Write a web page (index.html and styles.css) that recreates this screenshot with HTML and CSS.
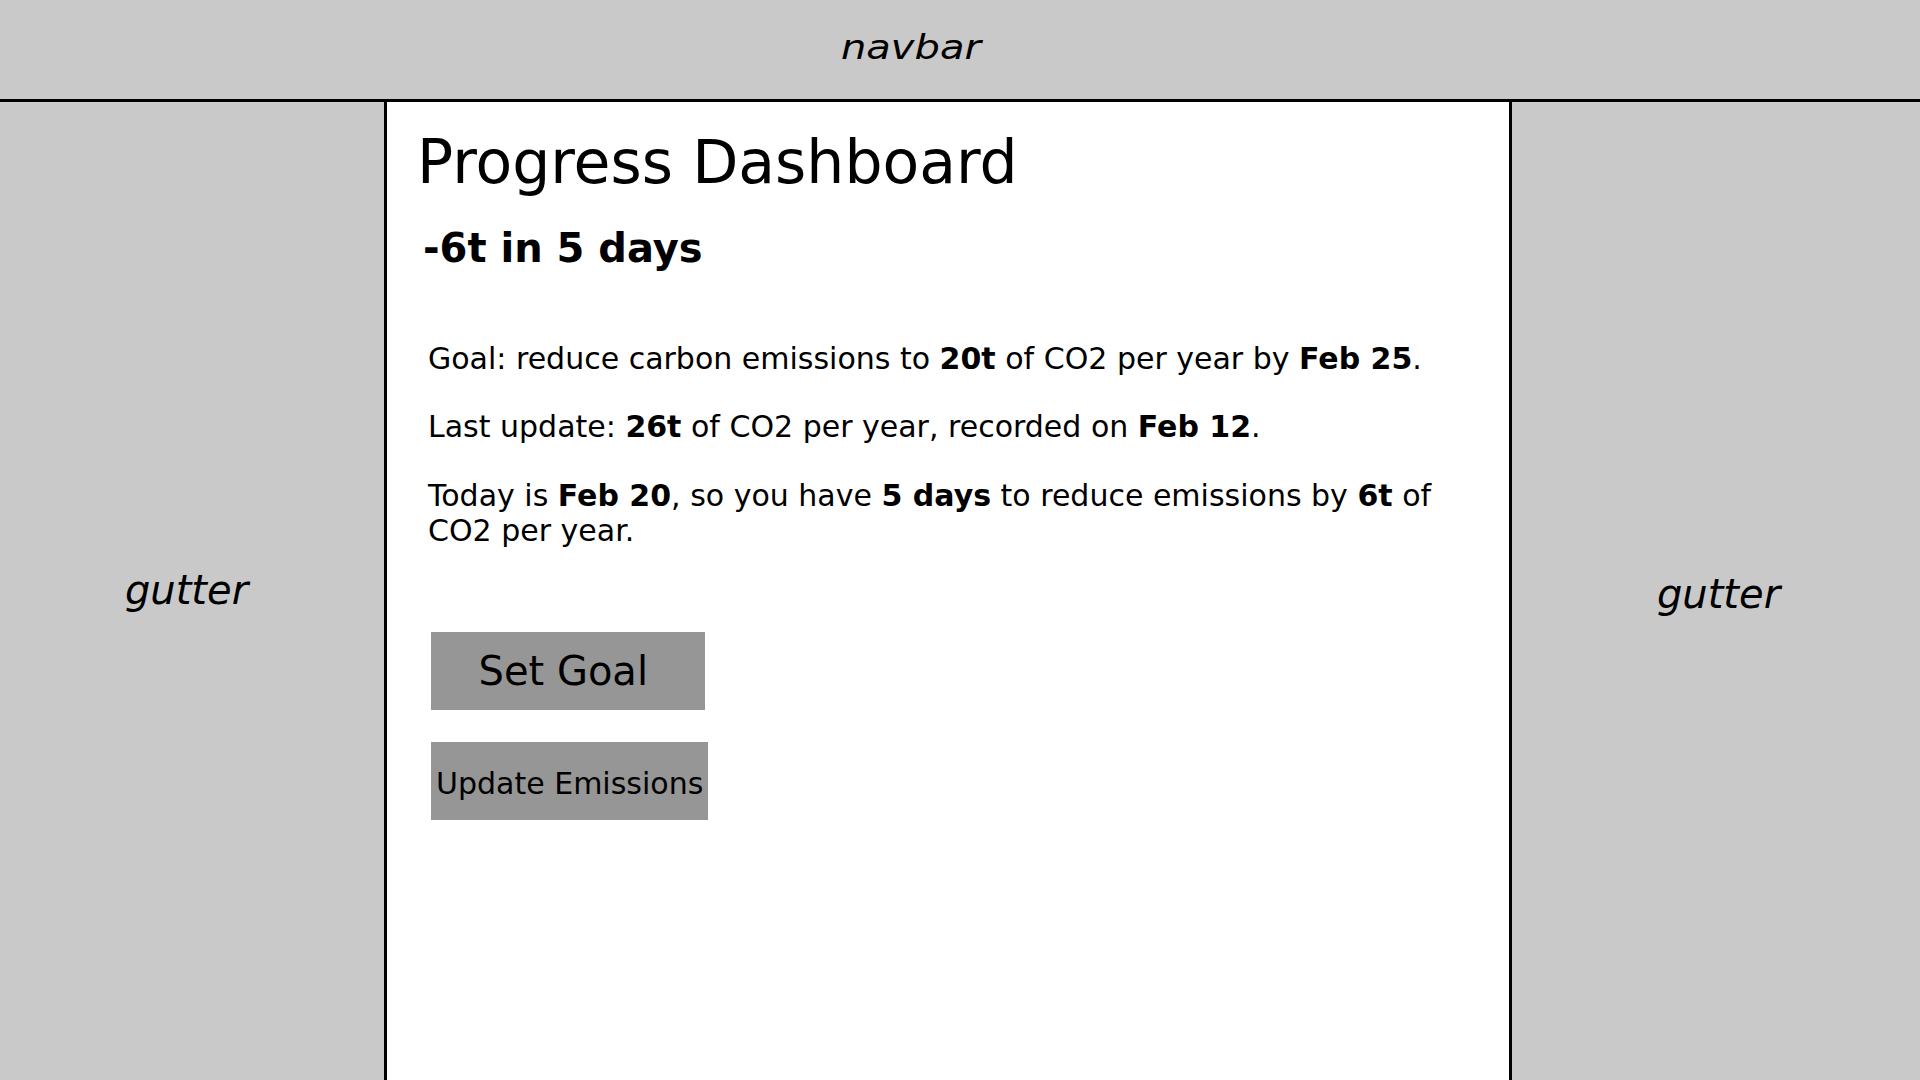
FILE: index.html
```html
<!DOCTYPE html>
<html lang="en">
<head>
<meta charset="utf-8">
<title>Progress Dashboard</title>
<link rel="stylesheet" href="styles.css">
</head>
<body>
<header class="navbar"><span class="navbar-label">navbar</span></header>
<div class="layout">
  <aside class="gutter gutter-left"><span class="gutter-label">gutter</span></aside>
  <main class="main">
    <h1 class="title">Progress Dashboard</h1>
    <h2 class="summary">-6t in 5 days</h2>
    <p class="info">Goal: reduce carbon emissions to <b>20t</b> of CO2 per year by <b>Feb 25</b>.</p>
    <p class="info">Last update: <b>26t</b> of CO2 per year, recorded on <b>Feb 12</b>.</p>
    <p class="info">Today is <b>Feb 20</b>, so you have <b>5 days</b> to reduce emissions by <b>6t</b> of CO2 per year.</p>
    <div class="actions">
      <button class="btn btn-goal" type="button">Set Goal</button>
      <button class="btn btn-update" type="button">Update Emissions</button>
    </div>
  </main>
  <aside class="gutter gutter-right"><span class="gutter-label">gutter</span></aside>
</div>
</body>
</html>
```
FILE: styles.css
```css
html, body {
  margin: 0;
  padding: 0;
  height: 100%;
}

body {
  font-family: "DejaVu Sans", "Liberation Sans", sans-serif;
  color: #000;
  background: #c9c9c9;
  display: flex;
  flex-direction: column;
  overflow: hidden;
}

.navbar {
  height: 99px;
  box-sizing: content-box;
  border-bottom: 3px solid #000;
  background: #c9c9c9;
  display: flex;
  align-items: center;
  padding-left: 841px;
  flex: none;
}

.navbar-label {
  display: inline-block;
  font-size: 40px;
  font-style: italic;
  transform: scaleY(0.85);
  margin-top: -6px;
}

.layout {
  flex: 1;
  display: flex;
  min-height: 0;
}

.gutter {
  background: #c9c9c9;
  display: flex;
  align-items: center;
  justify-content: center;
  box-sizing: border-box;
}

.gutter-left {
  width: 384px;
  flex: none;
  padding-right: 11px;
  padding-bottom: 3px;
}

.gutter-right {
  flex: 1;
  padding-top: 6px;
  padding-left: 5px;
}

.gutter-label {
  font-size: 40px;
  font-style: italic;
}

.main {
  width: 1128px;
  flex: none;
  box-sizing: border-box;
  background: #fff;
  border-left: 3px solid #000;
  border-right: 3px solid #000;
  padding-top: 24.6px;
}

.title {
  font-size: 60px;
  font-weight: normal;
  line-height: normal;
  margin: 0 0 0 30px;
}

.summary {
  font-size: 40px;
  font-weight: bold;
  line-height: normal;
  margin: 28.5px 0 0 36px;
}

.info {
  font-size: 30px;
  line-height: normal;
  margin: 33.5px 40px 0 41px;
}

.summary + .info {
  margin-top: 69.7px;
}

.actions {
  display: flex;
  flex-direction: column;
  align-items: flex-start;
  gap: 32px;
  margin: 84px 0 0 44px;
}

.btn {
  font-family: "DejaVu Sans", "Liberation Sans", sans-serif;
  color: #000;
  background: #969696;
  border: none;
  border-radius: 0;
  margin: 0;
  height: 78px;
  line-height: 78px;
  text-align: left;
  box-sizing: border-box;
  white-space: nowrap;
  overflow: hidden;
}

.btn-goal {
  width: 274px;
  font-size: 40px;
  padding: 0 0 0 47.5px;
}

.btn-update {
  width: 277px;
  font-size: 30px;
  line-height: 83px;
  padding: 0 0 0 5px;
}
```
